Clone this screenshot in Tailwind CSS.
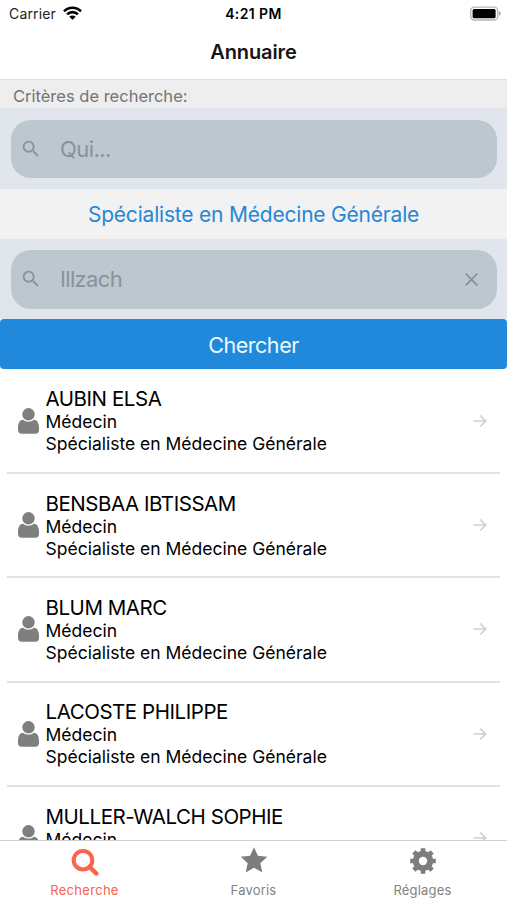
<!DOCTYPE html>
<html lang="fr">
<head>
<meta charset="utf-8">
<title>Annuaire</title>
<script src="https://cdn.jsdelivr.net/npm/@tailwindcss/browser@4"></script>
</head>
<body class="bg-white">
<svg class="hidden">
  <symbol id="magnifier" viewBox="0 0 24 24"><path d="M15.5 14h-.79l-.28-.27A6.471 6.471 0 0 0 16 9.500 6.500 6.500 0 1 0 9.500 16c1.610 0 3.090-.59 4.230-1.570l.27.28v.79l5 4.990L20.490 19l-4.990-5zm-6 0C7.010 14 5 11.990 5 9.500S7.010 5 9.500 5 14 7.010 14 9.500 11.990 14 9.500 14z"/></symbol>
  <symbol id="person" viewBox="0 0 21 26"><circle cx="10.500" cy="6.300" r="6.200"/><path d="M5 11.700C1.300 12 0 15.500 0 20.500v1.200c0 2.500 1.300 4 3.800 4h13.400c2.500 0 3.800-1.500 3.800-4v-1.200c0-5-1.300-8.500-5-8.800a8.200 8.200 0 0 1-11 0Z"/></symbol>
  <symbol id="arrow" viewBox="0 0 14 14"><path d="M.5 7h12M7.200 1.500 12.700 7l-5.500 5.500" fill="none" stroke="currentColor" stroke-width="1.700"/></symbol>
</svg>
<div class="flex h-[900px] w-[507px] flex-col overflow-hidden bg-white font-['Inter','Liberation_Sans',sans-serif] text-black">
  <header class="h-[80px] shrink-0 border-b border-[#dedede]">
    <div class="grid h-[27px] grid-cols-3 items-center pr-[6px] pl-[9px] text-[14px]">
      <div class="flex items-center gap-[7px]"><span class="tracking-[0.15px] text-[#222]">Carrier</span>
        <svg class="mt-[-2px] h-[14px] w-[19px]" viewBox="0 0 19 14"><g fill="none" stroke="#000" stroke-width="2.600"><path d="M1 5.300a12 12 0 0 1 17 0M4.100 8.400a7.600 7.600 0 0 1 10.800 0"/></g><path d="M6.300 10.700a4.600 4.600 0 0 1 6.400 0L9.500 13.800Z"/></svg>
      </div>
      <span class="pr-[3px] text-center font-semibold tracking-[0.4px]">4:21 PM</span>
      <svg class="h-[15px] w-[32px] justify-self-end" viewBox="0 0 32 15"><rect x="1.700" y="1.200" width="27" height="12.800" rx="3.500" fill="#fff" stroke="#b5b5b5" stroke-width="1.300"/><rect x="3.600" y="3" width="23" height="9.200" rx="1.500"/><path d="M29.800 5v5q2-1 2-2.500t-2-2.500" fill="#aaa"/></svg>
    </div>
    <h1 class="pt-[9px] text-center text-[20px] leading-[33px] font-semibold tracking-[-0.1px] text-[#151515]">Annuaire</h1>
  </header>
  <section class="shrink-0 bg-[#e1e6ec]">
    <h2 class="h-[28px] bg-[#eeeeee] pl-[13px] text-[16.500px] leading-[32px] text-[#747474]">Critères de recherche:</h2>
    <div class="h-[81px] pt-[11.500px] pr-[10px] pl-[11px]">
      <div class="flex h-[58.500px] items-center rounded-[20px] bg-[#bdc7cf] pl-[9px] text-[#86939e]">
        <svg class="h-[22px] w-[22px] fill-current"><use href="#magnifier"/></svg>
        <span class="pt-[1px] pl-[18px] text-[22px] tracking-[-0.55px]">Qui...</span>
      </div>
    </div>
    <div class="h-[50px] bg-[#f2f2f2] text-center text-[21px] leading-[52px] tracking-[-0.2px] text-[#2787d5]">Spécialiste en Médecine Générale</div>
    <div class="h-[80px] pt-[11px] pr-[10px] pl-[11px]">
      <div class="flex h-[58.500px] items-center rounded-[20px] bg-[#bdc7cf] pr-[19px] pl-[9px] text-[#86939e]">
        <svg class="h-[22px] w-[22px] fill-current"><use href="#magnifier"/></svg>
        <span class="grow pl-[18px] text-[22px] tracking-[-0.65px]">Illzach</span>
        <svg class="h-[13px] w-[13px]" viewBox="0 0 13 13"><path d="m.7.700 11.600 11.600M12.300.700.7 12.300" stroke="currentColor" stroke-width="1.900"/></svg>
      </div>
    </div>
  </section>
  <div class="shrink-0 bg-[#f3f5f7]"><button class="block h-[50px] w-full rounded-[4px] bg-[#2189dc] text-center text-[21.500px] leading-[52px] tracking-[-0.45px] text-[#eafaff]">Chercher</button></div>
  <main class="min-h-0 flex-1 overflow-hidden pt-[0.700px]">
    <ul>
      <li class="mx-[7px] flex h-[104.300px] items-center border-b-2 border-[#e1e1e1] pr-[13px] pl-[11px]"><svg class="h-[26px] w-[21px] fill-[#7f7f7f]"><use href="#person"/></svg><div class="grow pl-[6.500px]"><p class="text-[20.500px] leading-[25px] tracking-[-0.45px]">AUBIN ELSA</p><p class="text-[17.500px] leading-[22px]">Médecin</p><p class="text-[17.500px] leading-[22px]">Spécialiste en Médecine Générale</p></div><svg class="h-[14px] w-[14px] text-[#cfcfcf]"><use href="#arrow"/></svg></li>
      <li class="mx-[7px] flex h-[104.300px] items-center border-b-2 border-[#e1e1e1] pr-[13px] pl-[11px]"><svg class="h-[26px] w-[21px] fill-[#7f7f7f]"><use href="#person"/></svg><div class="grow pl-[6.500px]"><p class="text-[20.500px] leading-[25px] tracking-[-0.45px]">BENSBAA IBTISSAM</p><p class="text-[17.500px] leading-[22px]">Médecin</p><p class="text-[17.500px] leading-[22px]">Spécialiste en Médecine Générale</p></div><svg class="h-[14px] w-[14px] text-[#cfcfcf]"><use href="#arrow"/></svg></li>
      <li class="mx-[7px] flex h-[104.300px] items-center border-b-2 border-[#e1e1e1] pr-[13px] pl-[11px]"><svg class="h-[26px] w-[21px] fill-[#7f7f7f]"><use href="#person"/></svg><div class="grow pl-[6.500px]"><p class="text-[20.500px] leading-[25px] tracking-[-0.45px]">BLUM MARC</p><p class="text-[17.500px] leading-[22px]">Médecin</p><p class="text-[17.500px] leading-[22px]">Spécialiste en Médecine Générale</p></div><svg class="h-[14px] w-[14px] text-[#cfcfcf]"><use href="#arrow"/></svg></li>
      <li class="mx-[7px] flex h-[104.300px] items-center border-b-2 border-[#e1e1e1] pr-[13px] pl-[11px]"><svg class="h-[26px] w-[21px] fill-[#7f7f7f]"><use href="#person"/></svg><div class="grow pl-[6.500px]"><p class="text-[20.500px] leading-[25px] tracking-[-0.45px]">LACOSTE PHILIPPE</p><p class="text-[17.500px] leading-[22px]">Médecin</p><p class="text-[17.500px] leading-[22px]">Spécialiste en Médecine Générale</p></div><svg class="h-[14px] w-[14px] text-[#cfcfcf]"><use href="#arrow"/></svg></li>
      <li class="mx-[7px] flex h-[104.300px] items-center pr-[13px] pb-[2px] pl-[11px]"><svg class="h-[26px] w-[21px] fill-[#7f7f7f]"><use href="#person"/></svg><div class="grow pb-[22px] pl-[6.500px]"><p class="text-[20.500px] leading-[25px] tracking-[-0.45px]">MULLER-WALCH SOPHIE</p><p class="text-[17.500px] leading-[22px]">Médecin</p></div><svg class="h-[14px] w-[14px] text-[#cfcfcf]"><use href="#arrow"/></svg></li>
    </ul>
  </main>
  <nav class="grid h-[60px] shrink-0 grid-cols-3 border-t border-[#d2d2d2] bg-white text-[13px] tracking-[0.200px] text-[#828282]">
    <a class="flex flex-col items-center pt-[7px] text-[#f9644b]"><svg class="h-[28px] w-[28px]" viewBox="0 0 28 28" fill="none" stroke="currentColor"><circle cx="12" cy="12.200" r="9.300" stroke-width="4"/><path d="m18.700 19 6.600 6.500" stroke-width="4.500" stroke-linecap="round"/></svg><span class="pt-[4px] leading-[20px] tracking-[0.300px]">Recherche</span></a>
    <a class="flex flex-col items-center pt-[5px]"><svg class="h-[28px] w-[28px] fill-[#7d7d7d]" viewBox="0 0 28 28"><path d="m14 1.200 3.900 8.600 9.400 1-7 6.400 2 9.300L14 21.800l-8.300 4.700 2-9.300-7-6.400 9.400-1Z"/></svg><span class="pt-[6px] leading-[20px]">Favoris</span></a>
    <a class="flex flex-col items-center pt-[6px]"><svg class="h-[28px] w-[28px] text-[#7d7d7d]" viewBox="-14 -14 28 28"><circle r="7.200" fill="none" stroke="currentColor" stroke-width="6"/><path d="M0-9v-1.500M0 9v1.500M-9 0h-1.500M9 0h1.500M6.500 6.500l1 1M-6.500-6.500l-1-1M6.500-6.500l1-1M-6.500 6.500l-1 1" stroke="currentColor" stroke-width="4.600" stroke-linecap="square"/></svg><span class="pt-[5px] leading-[20px]">Réglages</span></a>
  </nav>
</div>
</body>
</html>
